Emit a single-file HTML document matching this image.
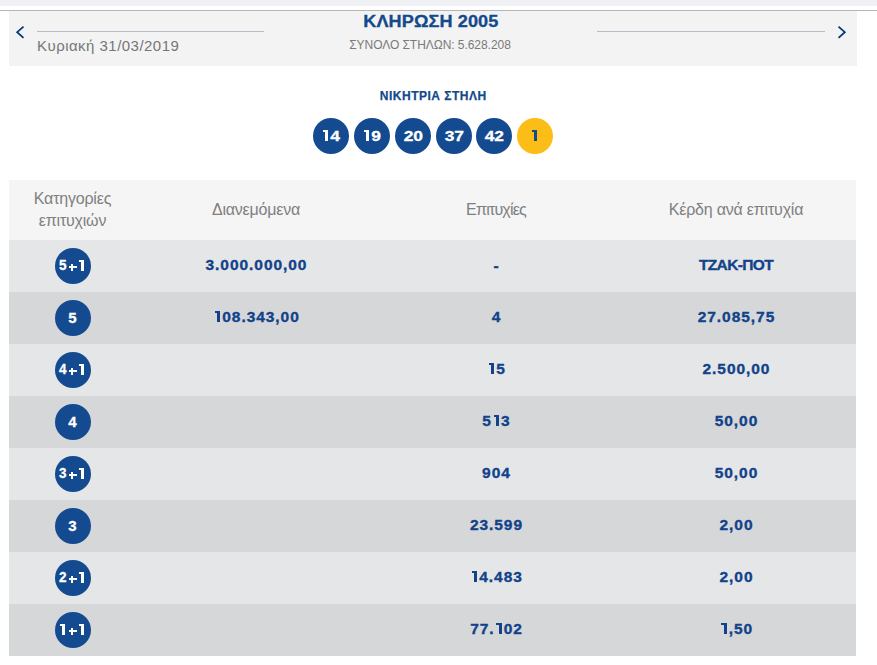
<!DOCTYPE html>
<html><head><meta charset="utf-8">
<style>
*{margin:0;padding:0;box-sizing:border-box}
html,body{width:877px;height:665px;overflow:hidden;background:#fff;font-family:"Liberation Sans",sans-serif}
.topstrip{position:absolute;left:0;top:0;width:877px;height:6px;background:#f0f1f4}
.topline{position:absolute;left:0;top:10px;width:877px;height:1px;background:#b4b4b4}
.panel{position:absolute;left:9px;top:11px;width:848px;height:55px;background:#f3f3f3}
.chev{position:absolute}
.hline{position:absolute;height:1px;background:#b9bcc6;top:31px}
.date{position:absolute;left:37px;top:37px;font-size:15px;letter-spacing:0.47px;color:#767676;white-space:nowrap}
.ctr{position:absolute;width:848px;text-align:center;white-space:nowrap}
.ctr span,.c span{display:inline-block}
.title{left:6.5px;top:13px;font-size:16px;font-weight:bold;color:#134a8b}
.title span{transform:scaleX(1.13);letter-spacing:0.1px;-webkit-text-stroke:0.3px #134a8b}
.sub{left:6px;top:37.5px;font-size:12px;color:#7a7a7a;letter-spacing:-0.05px}
.win{left:9px;top:88.5px;font-size:12px;font-weight:bold;color:#134a8b;letter-spacing:0.5px;padding-left:0.5px;-webkit-text-stroke:0.25px #134a8b}
.ball{position:absolute;top:118px;width:36px;height:36px;border-radius:50%;background:#134a90;color:#fff;font-weight:bold;font-size:15px;line-height:36px;text-align:center}
.one{position:absolute;top:12px;width:5px;height:10.9px;background:linear-gradient(currentColor,currentColor) right top/3px 100% no-repeat,linear-gradient(currentColor,currentColor) left top/100% 2px no-repeat}
.pl{position:absolute;top:15.8px;left:14px;width:8.2px;height:7.2px;background:linear-gradient(currentColor,currentColor) center/100% 2.3px no-repeat,linear-gradient(currentColor,currentColor) center/2.3px 100% no-repeat}
.dg{position:absolute;top:0;line-height:36px}
.rb .dg{top:-0.6px;transform:scaleX(0.9);transform-origin:right center}
.ball span{display:inline-block;transform:scaleX(1.16);-webkit-text-stroke:0.3px #fff}
.ball.y{background:#fbbd16;color:#134a8b}
.ball.y span{-webkit-text-stroke:0.3px #134a8b}
.tbl{position:absolute;left:9px;top:180px;width:847px}
.row{position:relative;height:52px;background:#e5e6e8}
.row.e{background:#d6d7d9}
.hdr{position:relative;height:60px;background:#f5f5f5;color:#7f7f7f;font-size:16px;letter-spacing:-0.2px}
.c{position:absolute;top:0;height:100%;display:flex;align-items:center;justify-content:center;text-align:center}
.c1{left:0;width:127px}.c2{left:127px;width:240px}.c3{left:367px;width:240px}.c4{left:607px;width:240px}
.row .c{font-weight:bold;font-size:15.5px;color:#11428a;padding-bottom:2px;-webkit-text-stroke:0.35px #11428a}
.row .c span{letter-spacing:0.95px;margin-right:-0.95px}
.o1{display:inline-block;width:5.6px;height:11px;margin:0 1.9px 0 1.6px;background:linear-gradient(currentColor,currentColor) right top/3px 100% no-repeat,linear-gradient(currentColor,currentColor) left top/100% 2px no-repeat}
.row .c.tz span{letter-spacing:-0.65px;margin-right:0}
.rb{position:relative;width:36px;height:36px;border-radius:50%;background:#134a90;color:#fff;font-weight:bold;font-size:15px;line-height:36px;text-align:center;margin-top:2px;-webkit-text-stroke:0.3px #fff}
</style></head><body>
<div class="topstrip"></div>
<div class="topline"></div>
<div class="panel"></div>
<svg class="chev" style="left:14px;top:24px" width="12" height="16" viewBox="0 0 12 16"><path d="M9.5 2.6 L3.2 8.2 L9.5 13.8" fill="none" stroke="#08377b" stroke-width="1.8"/></svg>
<svg class="chev" style="left:836px;top:24px" width="12" height="16" viewBox="0 0 12 16"><path d="M2.5 2.6 L8.8 8.2 L2.5 13.8" fill="none" stroke="#08377b" stroke-width="1.8"/></svg>
<div class="hline" style="left:37px;width:227px"></div>
<div class="hline" style="left:597px;width:228px"></div>
<div class="date">Κυριακή 31/03/2019</div>
<div class="ctr title"><span>ΚΛΗΡΩΣΗ 2005</span></div>
<div class="ctr sub">ΣΥΝΟΛΟ ΣΤΗΛΩΝ: 5.628.208</div>
<div class="ctr win">ΝΙΚΗΤΡΙΑ ΣΤΗΛΗ</div>
<div class="ball" style="left:313px"><b class="one" style="left:10.2px"></b><span class="dg" style="left:18px">4</span></div>
<div class="ball" style="left:354px"><b class="one" style="left:10.3px"></b><span class="dg" style="left:18px">9</span></div>
<div class="ball" style="left:395px"><span>20</span></div>
<div class="ball" style="left:436px"><span>37</span></div>
<div class="ball" style="left:476px"><span>42</span></div>
<div class="ball y" style="left:517px"><b class="one" style="left:14.8px"></b></div>

<div class="tbl">
<div class="hdr">
<div class="c c1" style="line-height:22px">Κατηγορίες<br>επιτυχιών</div>
<div class="c c2">Διανεμόμενα</div>
<div class="c c3" style="letter-spacing:-0.8px">Επιτυχίες</div>
<div class="c c4">Κέρδη ανά επιτυχία</div>
</div>
<div class="row"><div class="c c1"><div class="rb"><span class="dg" style="right:24.4px">5</span><b class="pl"></b><b class="one" style="left:24.2px"></b></div></div><div class="c c2"><span>3.000.000,00</span></div><div class="c c3"><span style="position:relative;top:1.3px">-</span></div><div class="c c4 tz"><span>ΤΖΑΚ-ΠΟΤ</span></div></div>
<div class="row e"><div class="c c1"><div class="rb">5</div></div><div class="c c2"><span><b class="o1"></b>08.343,00</span></div><div class="c c3"><span>4</span></div><div class="c c4"><span>27.085,75</span></div></div>
<div class="row"><div class="c c1"><div class="rb"><span class="dg" style="right:24.4px">4</span><b class="pl"></b><b class="one" style="left:24.2px"></b></div></div><div class="c c2"></div><div class="c c3"><span><b class="o1"></b>5</span></div><div class="c c4"><span>2.500,00</span></div></div>
<div class="row e"><div class="c c1"><div class="rb">4</div></div><div class="c c2"></div><div class="c c3"><span>5<b class="o1"></b>3</span></div><div class="c c4"><span>50,00</span></div></div>
<div class="row"><div class="c c1"><div class="rb"><span class="dg" style="right:24.4px">3</span><b class="pl"></b><b class="one" style="left:24.2px"></b></div></div><div class="c c2"></div><div class="c c3"><span>904</span></div><div class="c c4"><span>50,00</span></div></div>
<div class="row e"><div class="c c1"><div class="rb">3</div></div><div class="c c2"></div><div class="c c3"><span>23.599</span></div><div class="c c4"><span>2,00</span></div></div>
<div class="row"><div class="c c1"><div class="rb"><span class="dg" style="right:24.4px">2</span><b class="pl"></b><b class="one" style="left:24.2px"></b></div></div><div class="c c2"></div><div class="c c3"><span><b class="o1"></b>4.483</span></div><div class="c c4"><span>2,00</span></div></div>
<div class="row e"><div class="c c1"><div class="rb"><b class="one" style="left:5px"></b><b class="pl"></b><b class="one" style="left:24.2px"></b></div></div><div class="c c2"></div><div class="c c3"><span>77.<b class="o1"></b>02</span></div><div class="c c4"><span><b class="o1"></b>,50</span></div></div>
</div>
</body></html>
